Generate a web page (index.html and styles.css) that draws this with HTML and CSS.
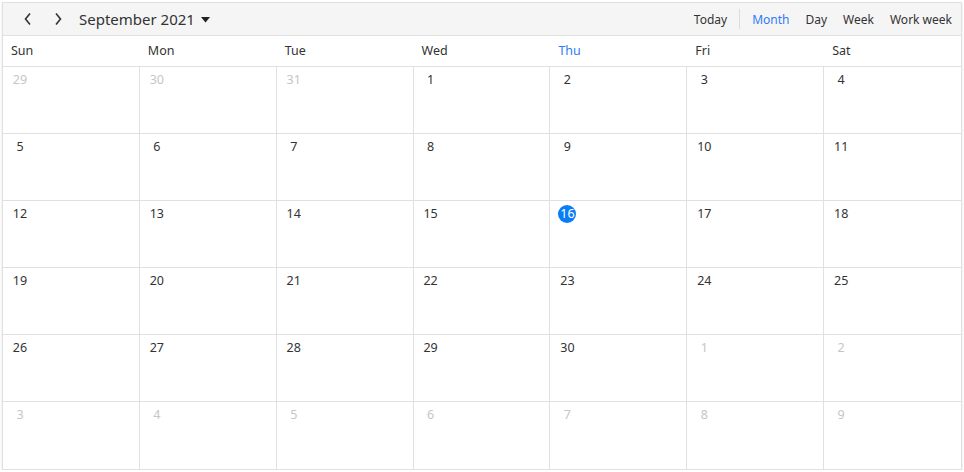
FILE: index.html
```html
<!DOCTYPE html>
<html lang="en">
<head>
    <meta charset="UTF-8">
    <title>Schedule - Month</title>
    <link rel="stylesheet" href="styles.css">
</head>
<body>
    <div class="scheduler">
        <div class="toolbar">
            <div class="nav">
                <button class="nav-btn" title="Previous">
                    <svg width="10" height="14" viewBox="0 0 10 14"><path d="M7 1.5 L2.5 7 L7 12.5" fill="none" stroke="#333" stroke-width="1.6"/></svg>
                </button>
                <button class="nav-btn" title="Next">
                    <svg width="10" height="14" viewBox="0 0 10 14"><path d="M3 1.5 L7.5 7 L3 12.5" fill="none" stroke="#333" stroke-width="1.6"/></svg>
                </button>
                <span class="title">September 2021</span>
                <svg class="caret" width="9" height="6" viewBox="0 0 9 6"><path d="M0 0 H9 L4.5 5.5 Z" fill="#222"/></svg>
            </div>
            <div class="views">
                <span class="view">Today</span>
                <span class="sep"></span>
                <span class="view active">Month</span>
                <span class="view">Day</span>
                <span class="view">Week</span>
                <span class="view">Work week</span>
            </div>
        </div>
        <div class="day-names">
            <div>Sun</div><div>Mon</div><div>Tue</div><div>Wed</div><div class="today-name">Thu</div><div>Fri</div><div>Sat</div>
        </div>
        <div class="month" id="month"></div>
    </div>

    <script>
        // September 2021 starts on a Wednesday; fill 6 weeks
        const grid = document.getElementById('month');
        const start = new Date(2021, 7, 29);
        for (let i = 0; i < 42; i++) {
            const d = new Date(start);
            d.setDate(start.getDate() + i);
            const cell = document.createElement('div');
            cell.className = 'cell';
            const num = document.createElement('span');
            num.className = 'date';
            if (d.getMonth() !== 8) num.classList.add('other');
            if (d.getMonth() === 8 && d.getDate() === 16) num.classList.add('today');
            num.textContent = d.getDate();
            cell.appendChild(num);
            grid.appendChild(cell);
        }
    </script>
</body>
</html>
```

FILE: styles.css
```css
body {
    margin: 0;
    background: #fff;
    font-family: "Noto Sans", "Open Sans", sans-serif;
    color: #333;
}
.scheduler {
    margin: 2px 2px 0 2px;
    width: 958px;
    border: 1px solid #e0e0e0;
    box-shadow: 0 1px 2px rgba(0,0,0,0.12);
}
.toolbar {
    height: 32px;
    background: #f5f5f5;
    border-bottom: 1px solid #e0e0e0;
    display: flex;
    align-items: center;
    justify-content: space-between;
}
.nav {
    display: flex;
    align-items: center;
    padding-left: 10px;
}
.nav-btn {
    border: none;
    background: none;
    width: 30px;
    height: 30px;
    padding: 0;
    display: flex;
    align-items: center;
    justify-content: center;
}
.title {
    font-size: 15px;
    margin-left: 6px;
    color: #333;
}
.caret {
    margin-left: 6px;
    margin-top: 1px;
}
.views {
    display: flex;
    align-items: center;
    font-size: 12px;
    padding-right: 1px;
}
.view {
    padding: 0 8px;
    color: #333;
}
.view.active {
    color: #2e7cf6;
}
.sep {
    width: 1px;
    height: 20px;
    background: #dcdcdc;
    margin: 0 4px;
}
.day-names {
    display: grid;
    grid-template-columns: repeat(7, 1fr);
    height: 30px;
    border-bottom: 1px solid #e0e0e0;
    font-size: 12.5px;
}
.day-names div {
    padding-left: 8px;
    line-height: 29px;
}
.day-names .today-name {
    color: #2e7cf6;
}
.month {
    display: grid;
    grid-template-columns: repeat(7, 1fr);
    grid-auto-rows: 67px;
}
.cell {
    border-right: 1px solid #e0e0e0;
    border-bottom: 1px solid #e0e0e0;
    padding: 0 0 0 8px;
}
.cell:nth-child(7n) {
    border-right: none;
}
.cell:nth-last-child(-n+7) {
    border-bottom: none;
}
.date {
    display: inline-block;
    min-width: 18px;
    height: 18px;
    line-height: 18px;
    margin-top: 2px;
    text-align: center;
    font-size: 12.5px;
    color: #333;
}
.date.other {
    color: #c6c6c6;
}
.date.today {
    background: #0a7cf5;
    color: #fff;
    border-radius: 50%;
}
```
